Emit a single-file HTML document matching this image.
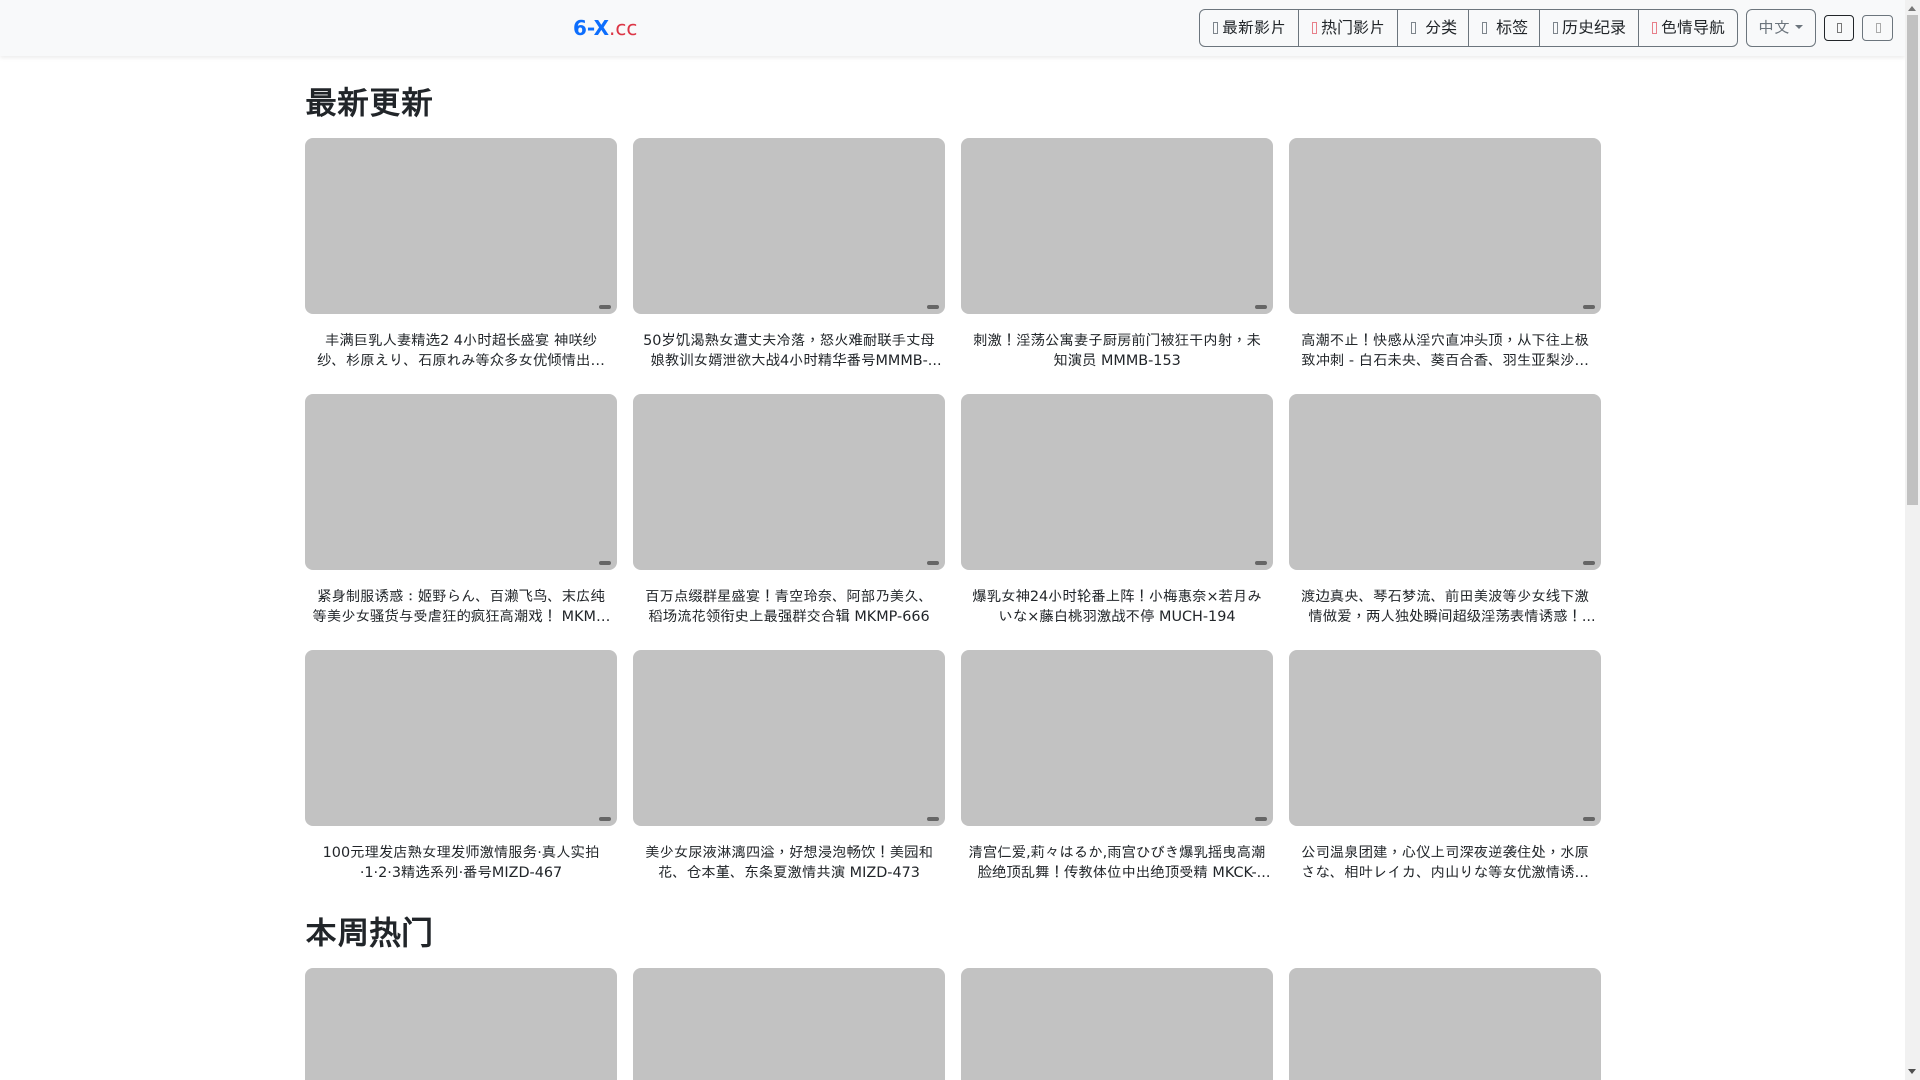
<!DOCTYPE html>
<html>
<head>
<meta charset="utf-8">
<title>6-X.cc</title>
<style>
*{box-sizing:border-box}
html,body{margin:0;padding:0;width:1920px;height:1080px;overflow:hidden;background:#fff}
body{font-family:"DejaVu Sans","IPAGothic",sans-serif;color:#212529;font-size:16px;position:relative}
.nav{position:absolute;left:0;top:0;width:1905px;height:56px;background:#f8f9fa;box-shadow:0 2px 4px rgba(0,0,0,.075)}
.logo{position:absolute;left:573px;top:16px;font-size:20px;line-height:24px;color:#dc3545;white-space:nowrap}
.logo b{color:#0d6efd}
.group{position:absolute;left:1199px;top:9px;width:539px;height:38px;border:1px solid #6c757d;border-radius:6px}
.group span{position:absolute;top:0;height:36px;line-height:36px;padding-left:12px;border-left:1px solid #6c757d;white-space:nowrap}
.group span:first-child{border-left:0}
i{display:inline-block;width:5px;height:12px;border:1px solid #7d858c;margin:0 4px 0 1px;vertical-align:-1px}
i.r{border-color:#e8808a}
.lang{position:absolute;left:1746px;top:9px;width:70px;height:38px;border:1px solid #6c757d;border-radius:6px;color:#6c757d;line-height:36px;padding-left:11px;white-space:nowrap}
.lang:after{content:"";position:absolute;left:48px;top:15px;border-top:4.8px solid #6c757d;border-left:4.8px solid transparent;border-right:4.8px solid transparent}
.sm{position:absolute;top:15px;width:31px;height:26px;border:1px solid #6c757d;border-radius:4px}
.sm i{position:absolute;left:12px;top:7px;margin:0;height:10px}
h2{position:absolute;left:305px;margin:0;font-size:32px;line-height:38px;font-weight:700;white-space:nowrap}
.card{position:absolute;width:312px}
.th{height:176px;background:#c2c2c2;border-radius:8px;position:relative}
.th:after{content:"";position:absolute;right:6px;bottom:5px;width:12px;height:4px;border-radius:2px;background:#666}
.t{margin:17px 5.6px 0;height:40px;font-size:14.4px;line-height:20px;text-align:center;overflow:hidden;display:-webkit-box;-webkit-line-clamp:2;-webkit-box-orient:vertical}
.x{margin:17px 0 0;height:40px;font-size:14.4px;line-height:20px;text-align:center;white-space:nowrap}
.x span{position:relative;left:7px}
.c{font-family:"Noto Sans CJK TC",sans-serif;font-weight:400;line-height:0}
.sb{position:absolute;left:1905px;top:0;width:15px;height:1080px;background:#f1f1f1}
.thumb{position:absolute;left:2px;top:15px;width:11px;height:490px;background:#c1c1c1}
.up,.dn{position:absolute;left:3px;width:0;height:0;border-left:4.5px solid transparent;border-right:4.5px solid transparent}
.up{top:6px;border-bottom:5px solid #777}
.dn{top:1069px;border-top:5px solid #505050}
</style>
</head>
<body>
<div class="nav">
  <div class="logo"><b>6-X</b>.cc</div>
  <div class="group">
    <span style="left:0;width:98px"><i></i>最新影片</span>
    <span style="left:98px;width:99px"><i class="r"></i>热门影片</span>
    <span style="left:197px;width:71px"><i></i> 分类</span>
    <span style="left:268px;width:71px"><i></i> 标签</span>
    <span style="left:339px;width:99px"><i></i>历史纪录</span>
    <span style="left:438px;width:99px"><i class="r"></i>色情导航</span>
  </div>
  <div class="lang">中文</div>
  <div class="sm" style="left:1824px;width:30px;border-color:#212529"><i style="border-color:#777"></i></div>
  <div class="sm" style="left:1862px"><i style="border-color:#aaa;left:13px"></i></div>
</div>

<h2 style="top:84px">最新更新</h2>

<div class="card" style="left:305px;top:138px"><div class="th"></div><div class="t">丰满巨乳人妻精选2 4小时超长盛宴 神咲纱纱、杉原えり、石原れみ等众多女优倾情出演 番号 MMMB-152</div></div>
<div class="card" style="left:633px;top:138px"><div class="th"></div><div class="x">50岁饥渴熟女遭丈夫冷落<b class="c">，</b>怒火难耐联手丈母<br><span>娘教训女婿泄欲大战4小时精华番号MMMB-...</span></div></div>
<div class="card" style="left:961px;top:138px"><div class="th"></div><div class="t">刺激！淫荡公寓妻子厨房前门被狂干内射<b class="c">，</b>未知演员 MMMB-153</div></div>
<div class="card" style="left:1289px;top:138px"><div class="th"></div><div class="t">高潮不止！快感从淫穴直冲头顶<b class="c">，</b>从下往上极致冲刺 - 白石未央、葵百合香、羽生亚梨沙等演员出演 番号</div></div>

<div class="card" style="left:305px;top:394px"><div class="th"></div><div class="t">紧身制服诱惑：姬野らん、百濑飞鸟、末広纯等美少女骚货与受虐狂的疯狂高潮戏！ MKMP-000</div></div>
<div class="card" style="left:633px;top:394px"><div class="th"></div><div class="t">百万点缀群星盛宴！青空玲奈、阿部乃美久、稻场流花领衔史上最强群交合辑 MKMP-666</div></div>
<div class="card" style="left:961px;top:394px"><div class="th"></div><div class="t">爆乳女神24小时轮番上阵！小梅惠奈×若月みいな×藤白桃羽激战不停 MUCH-194</div></div>
<div class="card" style="left:1289px;top:394px"><div class="th"></div><div class="x">渡边真央、琴石梦流、前田美波等少女线下激<br><span>情做爱<b class="c">，</b>两人独处瞬间超级淫荡表情诱惑！...</span></div></div>

<div class="card" style="left:305px;top:650px"><div class="th"></div><div class="t">100元理发店熟女理发师激情服务·真人实拍·1·2·3精选系列·番号MIZD-467</div></div>
<div class="card" style="left:633px;top:650px"><div class="th"></div><div class="t">美少女尿液淋漓四溢<b class="c">，</b>好想浸泡畅饮！美园和花、仓本堇、东条夏激情共演 MIZD-473</div></div>
<div class="card" style="left:961px;top:650px"><div class="th"></div><div class="x">清宫仁爱,莉々はるか,雨宫ひびき爆乳摇曳高潮<br><span>脸绝顶乱舞！传教体位中出绝顶受精 MKCK-...</span></div></div>
<div class="card" style="left:1289px;top:650px"><div class="th"></div><div class="t">公司温泉团建<b class="c">，</b>心仪上司深夜逆袭住处<b class="c">，</b>水原さな、相叶レイカ、内山りな等女优激情诱惑出演 番号</div></div>

<h2 style="top:914px">本周热门</h2>

<div class="card" style="left:305px;top:968px"><div class="th"></div></div>
<div class="card" style="left:633px;top:968px"><div class="th"></div></div>
<div class="card" style="left:961px;top:968px"><div class="th"></div></div>
<div class="card" style="left:1289px;top:968px"><div class="th"></div></div>

<div class="sb"><div class="up"></div><div class="thumb"></div><div class="dn"></div></div>
</body>
</html>
